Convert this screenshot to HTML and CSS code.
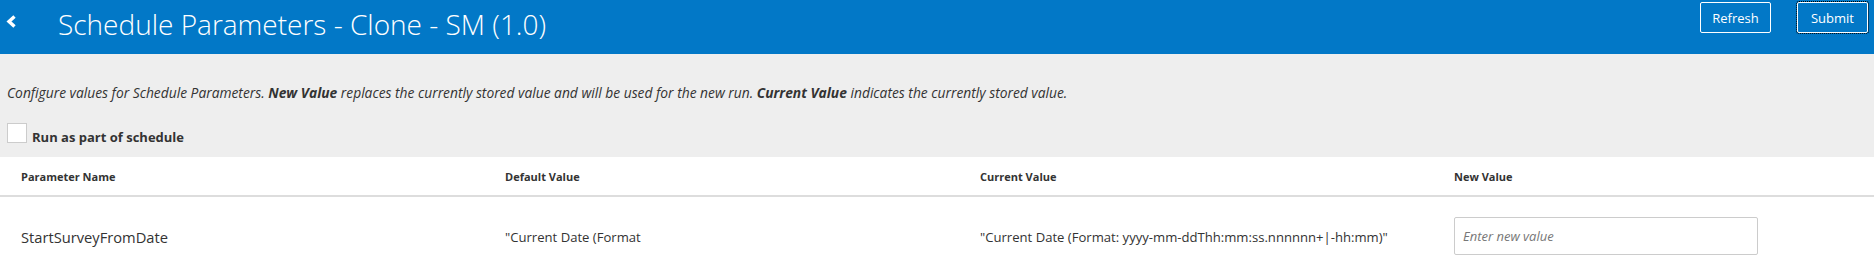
FILE: index.html
```html
<!DOCTYPE html>
<html lang="en">
<head>
  <meta charset="UTF-8" />
  <meta name="viewport" content="width=device-width, initial-scale=1.0" />
  <title>Schedule Parameters</title>
  <link rel="stylesheet" href="styles.css">
</head>
<body>
  <div class="top-bar">
    <a class="back" href="javascript:history.back()">
      <svg width="11" height="13" viewBox="0 0 11 13">
        <polyline points="8.5,1.5 3,6.5 8.5,11.5" fill="none" stroke="#fff" stroke-width="3.4" stroke-linejoin="miter" />
      </svg>
    </a>
    <div class="title">Schedule Parameters - Clone - SM (1.0)</div>
    <div class="actions">
      <button class="button">Refresh</button>
      <button class="button focused">Submit</button>
    </div>
  </div>

  <div class="info">
    <p class="intro">Configure values for Schedule Parameters. <b>New Value</b> replaces the currently stored value and will be used for the new run. <b>Current Value</b> indicates the currently stored value.</p>
    <label class="check">
      <span class="box"></span>
      <span>Run as part of schedule</span>
    </label>
  </div>

  <!-- Tabela de parametros -->
  <div class="params">
    <div class="row head">
      <div class="cell">Parameter Name</div>
      <div class="cell">Default Value</div>
      <div class="cell">Current Value</div>
      <div class="cell">New Value</div>
    </div>
    <div class="row">
      <div class="cell name">StartSurveyFromDate</div>
      <div class="cell">"Current Date (Format</div>
      <div class="cell">"Current Date (Format: yyyy-mm-ddThh:mm:ss.nnnnnn+|-hh:mm)"</div>
      <div class="cell"><input class="new-value" type="text" placeholder="Enter new value"></div>
    </div>
  </div>
</body>
</html>
```

FILE: styles.css
```css
body {
  margin: 0;
  padding: 0;
  font-family: 'Open Sans', 'Noto Sans', sans-serif;
  color: #333;
  background-color: #fff;
}

.top-bar {
  display: flex;
  align-items: flex-start;
  height: 54px;
  background-color: #0278c7;
  color: white;
}

.top-bar .back {
  display: flex;
  margin: 15px 0 0 6px;
}

.title {
  margin: 5px 0 0 41px;
  font-size: 28px;
  font-weight: 300;
  line-height: 38px;
  white-space: nowrap;
}

.actions {
  display: flex;
  gap: 26px;
  margin: 2px 6px 0 auto;
}

.button {
  width: 71px;
  height: 31px;
  padding: 0;
  background-color: transparent;
  color: #fff;
  border: 1px solid #fff;
  border-radius: 2px;
  font-family: inherit;
  font-size: 13px;
  cursor: pointer;
}

.button.focused {
  outline: 1px dotted #000;
}

.info {
  background-color: #eee;
  padding: 30px 7px 14px;
}

.intro {
  margin: 0 0 21px;
  font-size: 13.8px;
  font-style: italic;
  line-height: 18px;
  white-space: nowrap;
}

.intro b {
  font-weight: 700;
}

.check {
  display: flex;
  align-items: flex-end;
  gap: 5px;
  font-size: 13px;
  font-weight: 700;
}

.check .box {
  width: 18px;
  height: 18px;
  background-color: #fff;
  border: 1px solid #ccc;
}

.check span:last-child {
  line-height: 14px;
  margin-bottom: -1px;
}

.row {
  display: grid;
  grid-template-columns: 484px 475px 474px 1fr;
  align-items: center;
}

.row.head {
  height: 38px;
  border-bottom: 2px solid #ddd;
  font-size: 11px;
  font-weight: 700;
}

.row .cell {
  padding-left: 21px;
}

.row:not(.head) {
  height: 80px;
  font-size: 13.1px;
}

.row .name {
  font-size: 14.7px;
}

.new-value {
  box-sizing: border-box;
  width: 304px;
  height: 38px;
  margin: 0 0 2px 0;
  padding: 0 8px;
  border: 1px solid #ccc;
  border-radius: 2px;
  font-family: inherit;
  font-size: 13px;
  color: #333;
}

.new-value::placeholder {
  color: #777;
  font-style: italic;
}
```
